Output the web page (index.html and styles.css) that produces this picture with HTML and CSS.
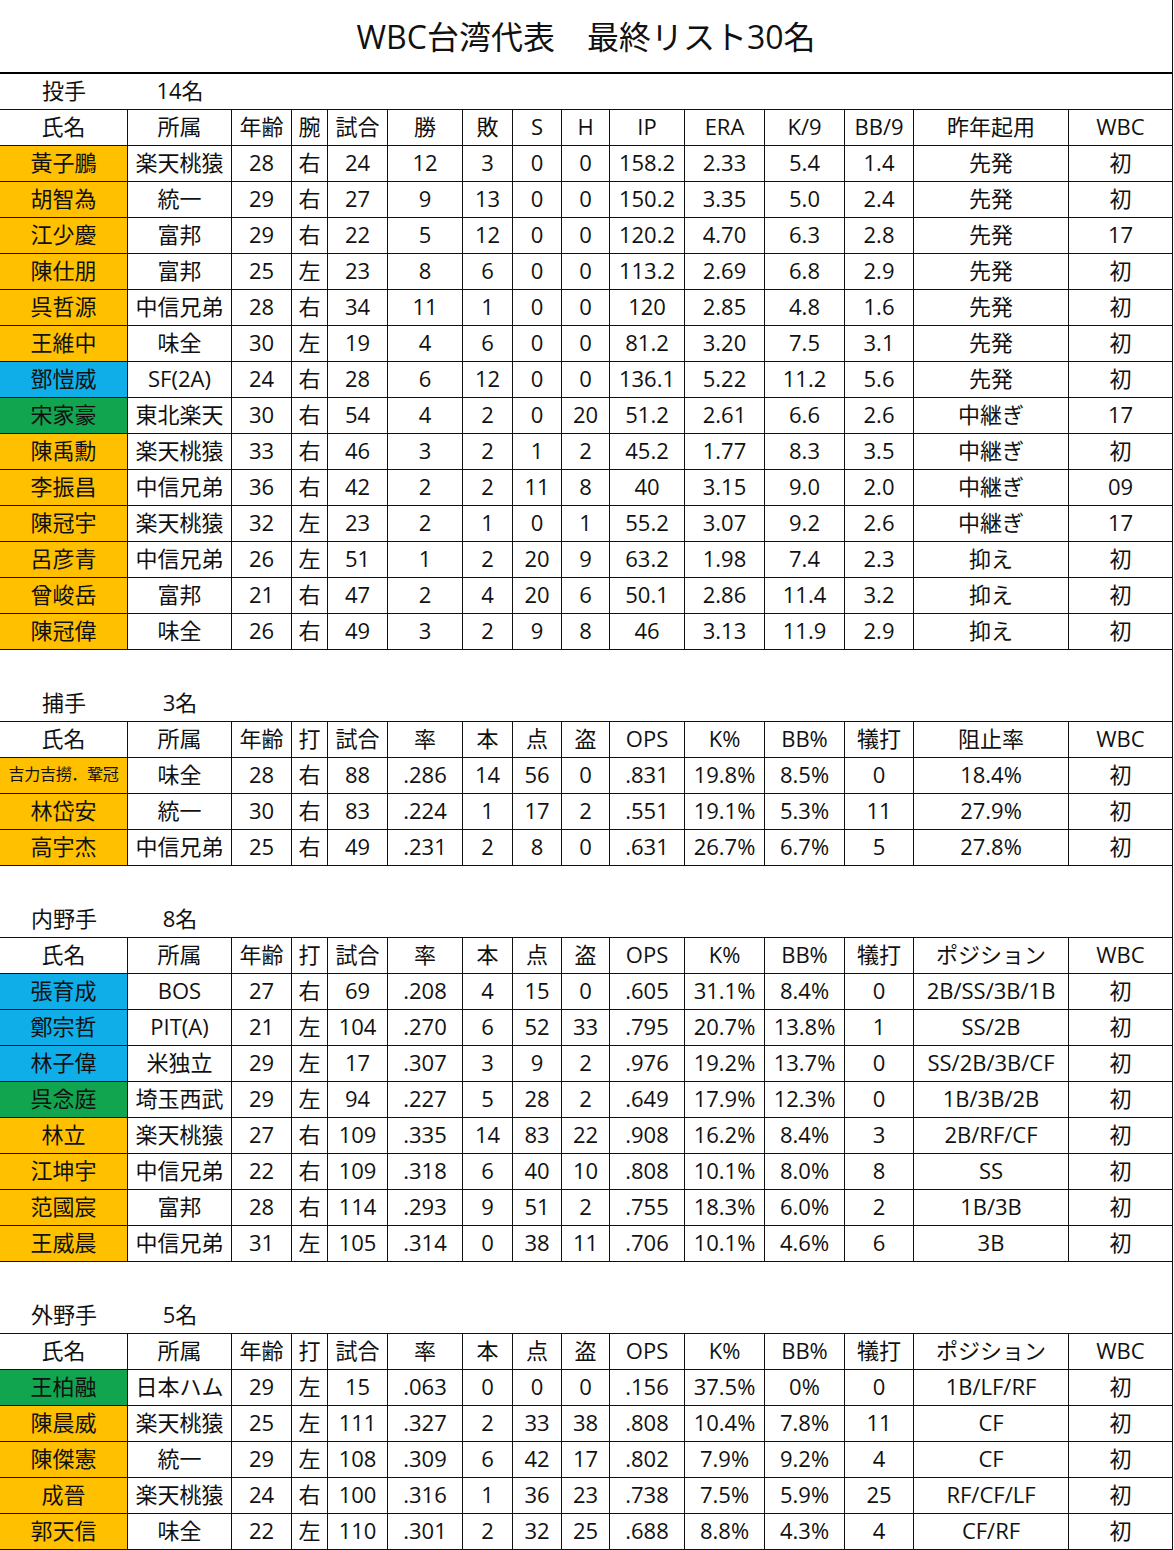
FILE: index.html
```html
<!DOCTYPE html>
<html lang="ja">
<head>
<meta charset="utf-8">
<title>WBC台湾代表 最終リスト30名</title>
<link rel="stylesheet" href="styles.css">
</head>
<body>
<div class="sheet">
  <div class="title">WBC台湾代表　最終リスト30名</div>

  <section class="sec first">
    <div class="label"><span>投手</span><span>14名</span></div>
    <div class="tbl">
      <div class="row head"><div>氏名</div><div>所属</div><div>年齢</div><div>腕</div><div>試合</div><div>勝</div><div>敗</div><div>S</div><div>H</div><div>IP</div><div>ERA</div><div>K/9</div><div>BB/9</div><div>昨年起用</div><div>WBC</div></div>
      <div class="row"><div class="n o">黃子鵬</div><div>楽天桃猿</div><div>28</div><div>右</div><div>24</div><div>12</div><div>3</div><div>0</div><div>0</div><div>158.2</div><div>2.33</div><div>5.4</div><div>1.4</div><div>先発</div><div>初</div></div>
      <div class="row"><div class="n o">胡智為</div><div>統一</div><div>29</div><div>右</div><div>27</div><div>9</div><div>13</div><div>0</div><div>0</div><div>150.2</div><div>3.35</div><div>5.0</div><div>2.4</div><div>先発</div><div>初</div></div>
      <div class="row"><div class="n o">江少慶</div><div>富邦</div><div>29</div><div>右</div><div>22</div><div>5</div><div>12</div><div>0</div><div>0</div><div>120.2</div><div>4.70</div><div>6.3</div><div>2.8</div><div>先発</div><div>17</div></div>
      <div class="row"><div class="n o">陳仕朋</div><div>富邦</div><div>25</div><div>左</div><div>23</div><div>8</div><div>6</div><div>0</div><div>0</div><div>113.2</div><div>2.69</div><div>6.8</div><div>2.9</div><div>先発</div><div>初</div></div>
      <div class="row"><div class="n o">呉哲源</div><div>中信兄弟</div><div>28</div><div>右</div><div>34</div><div>11</div><div>1</div><div>0</div><div>0</div><div>120</div><div>2.85</div><div>4.8</div><div>1.6</div><div>先発</div><div>初</div></div>
      <div class="row"><div class="n o">王維中</div><div>味全</div><div>30</div><div>左</div><div>19</div><div>4</div><div>6</div><div>0</div><div>0</div><div>81.2</div><div>3.20</div><div>7.5</div><div>3.1</div><div>先発</div><div>初</div></div>
      <div class="row"><div class="n b">鄧愷威</div><div>SF(2A)</div><div>24</div><div>右</div><div>28</div><div>6</div><div>12</div><div>0</div><div>0</div><div>136.1</div><div>5.22</div><div>11.2</div><div>5.6</div><div>先発</div><div>初</div></div>
      <div class="row"><div class="n g">宋家豪</div><div>東北楽天</div><div>30</div><div>右</div><div>54</div><div>4</div><div>2</div><div>0</div><div>20</div><div>51.2</div><div>2.61</div><div>6.6</div><div>2.6</div><div>中継ぎ</div><div>17</div></div>
      <div class="row"><div class="n o">陳禹勳</div><div>楽天桃猿</div><div>33</div><div>右</div><div>46</div><div>3</div><div>2</div><div>1</div><div>2</div><div>45.2</div><div>1.77</div><div>8.3</div><div>3.5</div><div>中継ぎ</div><div>初</div></div>
      <div class="row"><div class="n o">李振昌</div><div>中信兄弟</div><div>36</div><div>右</div><div>42</div><div>2</div><div>2</div><div>11</div><div>8</div><div>40</div><div>3.15</div><div>9.0</div><div>2.0</div><div>中継ぎ</div><div>09</div></div>
      <div class="row"><div class="n o">陳冠宇</div><div>楽天桃猿</div><div>32</div><div>左</div><div>23</div><div>2</div><div>1</div><div>0</div><div>1</div><div>55.2</div><div>3.07</div><div>9.2</div><div>2.6</div><div>中継ぎ</div><div>17</div></div>
      <div class="row"><div class="n o">呂彦青</div><div>中信兄弟</div><div>26</div><div>左</div><div>51</div><div>1</div><div>2</div><div>20</div><div>9</div><div>63.2</div><div>1.98</div><div>7.4</div><div>2.3</div><div>抑え</div><div>初</div></div>
      <div class="row"><div class="n o">曾峻岳</div><div>富邦</div><div>21</div><div>右</div><div>47</div><div>2</div><div>4</div><div>20</div><div>6</div><div>50.1</div><div>2.86</div><div>11.4</div><div>3.2</div><div>抑え</div><div>初</div></div>
      <div class="row"><div class="n o">陳冠偉</div><div>味全</div><div>26</div><div>右</div><div>49</div><div>3</div><div>2</div><div>9</div><div>8</div><div>46</div><div>3.13</div><div>11.9</div><div>2.9</div><div>抑え</div><div>初</div></div>
    </div>
  </section>

  <section class="sec">
    <div class="label"><span>捕手</span><span>3名</span></div>
    <div class="tbl">
      <div class="row head"><div>氏名</div><div>所属</div><div>年齢</div><div>打</div><div>試合</div><div>率</div><div>本</div><div>点</div><div>盗</div><div>OPS</div><div>K%</div><div>BB%</div><div>犠打</div><div>阻止率</div><div>WBC</div></div>
      <div class="row"><div class="n o small">吉力吉撈．鞏冠</div><div>味全</div><div>28</div><div>右</div><div>88</div><div>.286</div><div>14</div><div>56</div><div>0</div><div>.831</div><div>19.8%</div><div>8.5%</div><div>0</div><div>18.4%</div><div>初</div></div>
      <div class="row"><div class="n o">林岱安</div><div>統一</div><div>30</div><div>右</div><div>83</div><div>.224</div><div>1</div><div>17</div><div>2</div><div>.551</div><div>19.1%</div><div>5.3%</div><div>11</div><div>27.9%</div><div>初</div></div>
      <div class="row"><div class="n o">高宇杰</div><div>中信兄弟</div><div>25</div><div>右</div><div>49</div><div>.231</div><div>2</div><div>8</div><div>0</div><div>.631</div><div>26.7%</div><div>6.7%</div><div>5</div><div>27.8%</div><div>初</div></div>
    </div>
  </section>

  <section class="sec">
    <div class="label"><span>内野手</span><span>8名</span></div>
    <div class="tbl">
      <div class="row head"><div>氏名</div><div>所属</div><div>年齢</div><div>打</div><div>試合</div><div>率</div><div>本</div><div>点</div><div>盗</div><div>OPS</div><div>K%</div><div>BB%</div><div>犠打</div><div>ポジション</div><div>WBC</div></div>
      <div class="row"><div class="n b">張育成</div><div>BOS</div><div>27</div><div>右</div><div>69</div><div>.208</div><div>4</div><div>15</div><div>0</div><div>.605</div><div>31.1%</div><div>8.4%</div><div>0</div><div>2B/SS/3B/1B</div><div>初</div></div>
      <div class="row"><div class="n b">鄭宗哲</div><div>PIT(A)</div><div>21</div><div>左</div><div>104</div><div>.270</div><div>6</div><div>52</div><div>33</div><div>.795</div><div>20.7%</div><div>13.8%</div><div>1</div><div>SS/2B</div><div>初</div></div>
      <div class="row"><div class="n b">林子偉</div><div>米独立</div><div>29</div><div>左</div><div>17</div><div>.307</div><div>3</div><div>9</div><div>2</div><div>.976</div><div>19.2%</div><div>13.7%</div><div>0</div><div>SS/2B/3B/CF</div><div>初</div></div>
      <div class="row"><div class="n g">呉念庭</div><div>埼玉西武</div><div>29</div><div>左</div><div>94</div><div>.227</div><div>5</div><div>28</div><div>2</div><div>.649</div><div>17.9%</div><div>12.3%</div><div>0</div><div>1B/3B/2B</div><div>初</div></div>
      <div class="row"><div class="n o">林立</div><div>楽天桃猿</div><div>27</div><div>右</div><div>109</div><div>.335</div><div>14</div><div>83</div><div>22</div><div>.908</div><div>16.2%</div><div>8.4%</div><div>3</div><div>2B/RF/CF</div><div>初</div></div>
      <div class="row"><div class="n o">江坤宇</div><div>中信兄弟</div><div>22</div><div>右</div><div>109</div><div>.318</div><div>6</div><div>40</div><div>10</div><div>.808</div><div>10.1%</div><div>8.0%</div><div>8</div><div>SS</div><div>初</div></div>
      <div class="row"><div class="n o">范國宸</div><div>富邦</div><div>28</div><div>右</div><div>114</div><div>.293</div><div>9</div><div>51</div><div>2</div><div>.755</div><div>18.3%</div><div>6.0%</div><div>2</div><div>1B/3B</div><div>初</div></div>
      <div class="row"><div class="n o">王威晨</div><div>中信兄弟</div><div>31</div><div>左</div><div>105</div><div>.314</div><div>0</div><div>38</div><div>11</div><div>.706</div><div>10.1%</div><div>4.6%</div><div>6</div><div>3B</div><div>初</div></div>
    </div>
  </section>

  <section class="sec">
    <div class="label"><span>外野手</span><span>5名</span></div>
    <div class="tbl">
      <div class="row head"><div>氏名</div><div>所属</div><div>年齢</div><div>打</div><div>試合</div><div>率</div><div>本</div><div>点</div><div>盗</div><div>OPS</div><div>K%</div><div>BB%</div><div>犠打</div><div>ポジション</div><div>WBC</div></div>
      <div class="row"><div class="n g">王柏融</div><div>日本ハム</div><div>29</div><div>左</div><div>15</div><div>.063</div><div>0</div><div>0</div><div>0</div><div>.156</div><div>37.5%</div><div>0%</div><div>0</div><div>1B/LF/RF</div><div>初</div></div>
      <div class="row"><div class="n o">陳晨威</div><div>楽天桃猿</div><div>25</div><div>左</div><div>111</div><div>.327</div><div>2</div><div>33</div><div>38</div><div>.808</div><div>10.4%</div><div>7.8%</div><div>11</div><div>CF</div><div>初</div></div>
      <div class="row"><div class="n o">陳傑憲</div><div>統一</div><div>29</div><div>左</div><div>108</div><div>.309</div><div>6</div><div>42</div><div>17</div><div>.802</div><div>7.9%</div><div>9.2%</div><div>4</div><div>CF</div><div>初</div></div>
      <div class="row"><div class="n o">成晉</div><div>楽天桃猿</div><div>24</div><div>右</div><div>100</div><div>.316</div><div>1</div><div>36</div><div>23</div><div>.738</div><div>7.5%</div><div>5.9%</div><div>25</div><div>RF/CF/LF</div><div>初</div></div>
      <div class="row"><div class="n o">郭天信</div><div>味全</div><div>22</div><div>左</div><div>110</div><div>.301</div><div>2</div><div>32</div><div>25</div><div>.688</div><div>8.8%</div><div>4.3%</div><div>4</div><div>CF/RF</div><div>初</div></div>
    </div>
  </section>
</div>
</body>
</html>
```

FILE: styles.css
```css
html, body {
  margin: 0;
  padding: 0;
  background: #ffffff;
}

body {
  font-family: "Open Sans", "Noto Sans CJK JP", sans-serif;
  color: #111111;
}

.sheet {
  width: 1172px;
  border-right: 1px solid #111111;
  background: #ffffff;
}

.title {
  height: 72px;
  line-height: 74px;
  border-bottom: 2px solid #000000;
  text-align: center;
  font-size: 32px;
  letter-spacing: 0;
}

.sec {
  padding-top: 36px;
}

.sec.first {
  padding-top: 0;
}

.label {
  display: grid;
  grid-template-columns: 128px 104px;
  height: 35px;
  line-height: 33px;
  font-size: 22px;
  text-align: center;
}

.tbl {
  border-top: 1px solid #111111;
}

.row {
  display: grid;
  grid-template-columns: 128px 104px 60px 36px 60px 75px 50px 49px 48px 75px 80px 80px 69px 155px 103px;
  height: 36px;
  border-bottom: 1px solid #111111;
  box-sizing: border-box;
  font-size: 22px;
}

.row > div {
  height: 35px;
  line-height: 33px;
  text-align: center;
  white-space: nowrap;
  overflow: hidden;
  border-right: 1px solid #111111;
  box-sizing: border-box;
}

.row > div:last-child {
  border-right: none;
}

.n.o {
  background: #ffc000;
}

.n.b {
  background: #10aee8;
}

.n.g {
  background: #12a550;
}

.n.small {
  font-size: 16px;
  letter-spacing: -0.3px;
}
```
